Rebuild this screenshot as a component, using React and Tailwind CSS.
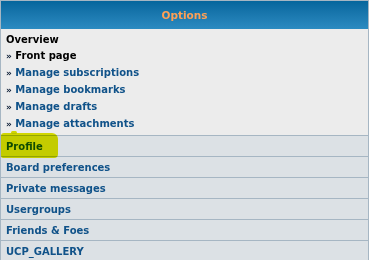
export default function App() {
  const items = [
    { t: "Front page", active: true },
    { t: "Manage subscriptions" },
    { t: "Manage bookmarks" },
    { t: "Manage drafts" },
    { t: "Manage attachments" },
  ];
  const rows = ["Board preferences", "Private messages", "Usergroups", "Friends & Foes", "UCP_GALLERY"];
  return (
    <div
      className="w-[369px] h-[260px] overflow-hidden bg-white"
      style={{ fontFamily: '"DejaVu Sans", Verdana, sans-serif' }}
    >
      <div className="border-x border-t border-[#a6b6c3] h-[300px] flex flex-col">
        <div className="h-[28px] pt-[1px] flex items-center justify-center bg-gradient-to-b from-[#05669d] to-[#2b8bc1] text-[#ffa055] text-[10.5px] font-bold">
          Options
        </div>
        <div className="bg-[#ececec] pt-[4px] pb-[3px] px-[5px] text-[10px] font-bold">
          <div className="h-[14px] leading-[14px] text-black">Overview</div>
          {items.map((it) => (
            <div
              key={it.t}
              className={`h-[17px] leading-[17px] ${it.active ? "text-black" : "text-[#105289]"}`}
            >
              <span className="text-[9px] text-[#10213a]">»</span> {it.t}
            </div>
          ))}
        </div>
        <div className="relative border-t border-[#a6b6c3] bg-[#dce1e5] h-[21px] flex items-center px-[5px] text-[10px] font-bold text-[#105289]">
          Profile
          <span className="absolute left-0 top-[-3px] w-[57px] h-[25px] bg-[#e2e800] mix-blend-multiply rounded-[3px_6px_4px_2px]"></span>
          <span className="absolute left-[10px] top-[-5px] w-[6px] h-[3px] bg-[#e2e800] mix-blend-multiply rounded-full"></span>
        </div>
        {rows.map((r) => (
          <div
            key={r}
            className="border-t border-[#a6b6c3] bg-[#dce1e5] h-[21px] flex items-center px-[5px] text-[10px] font-bold text-[#105289]"
          >
            {r}
          </div>
        ))}
      </div>
    </div>
  );
}
